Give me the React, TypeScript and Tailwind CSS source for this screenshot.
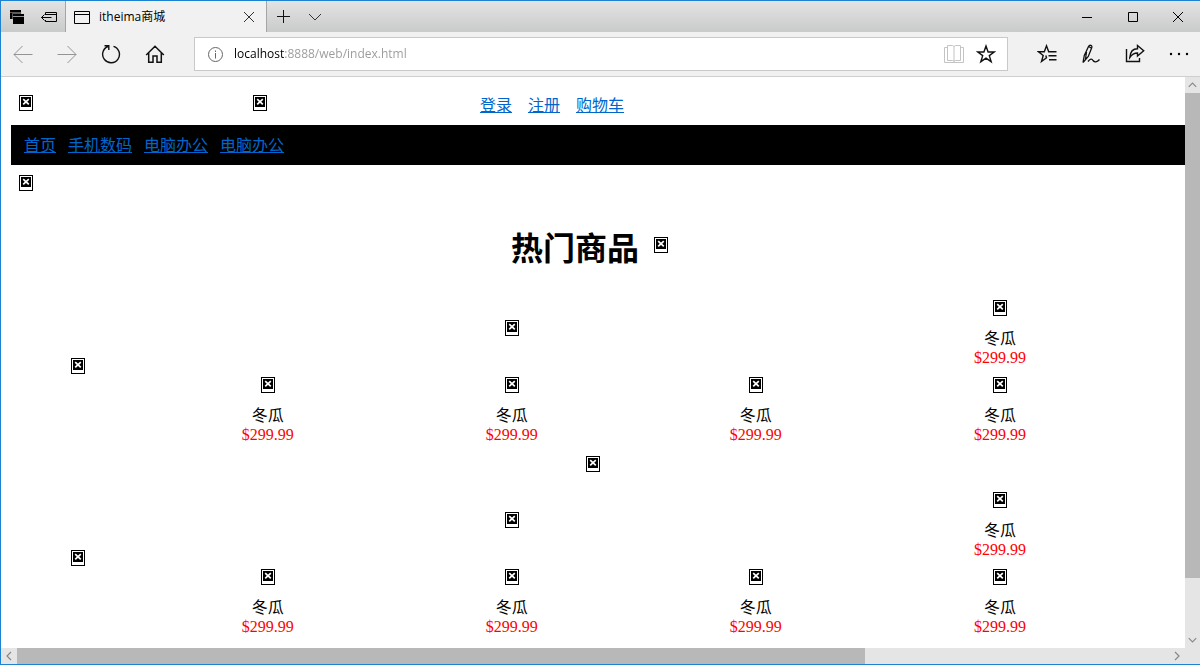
import type { ReactNode } from "react";

function BrokenImage({ label }: { label: string }) {
  return (
    <svg role="img" aria-label={label} width="14" height="16" viewBox="0 0 14 16" className="block shrink-0" shapeRendering="crispEdges">
      <rect x="0.5" y="0.5" width="13" height="15" fill="#fff" stroke="#000" />
      <rect x="2" y="2" width="10" height="10" fill="#000" />
      <path d="M4.2 4.2l5.600 5.200M9.800 4.200l-5.600 5.200" stroke="#fff" strokeWidth="1.7" shapeRendering="auto" />
    </svg>
  );
}

function IconButton({ label, className, children }: { label: string; className: string; children: ReactNode }) {
  return (
    <button type="button" aria-label={label} className={`flex shrink-0 items-center justify-center ${className}`}>
      {children}
    </button>
  );
}

function Icon({ size = 20, width = 1, color = "#111", children }: { size?: number; width?: number; color?: string; children: ReactNode }) {
  return (
    <svg width={size} height={size} viewBox={`0 0 ${size} ${size}`} fill="none" stroke={color} strokeWidth={width} aria-hidden="true">
      {children}
    </svg>
  );
}

function TitleBar() {
  return (
    <div className="flex h-[31px] shrink-0 bg-linear-to-b from-[#e3e3e3] to-[#c9cbca]">
      <IconButton label="Tabs you've set aside" className="w-8">
        <Icon size={16} color="none">
          <path d="M1 1h11v9H1z" fill="#000" />
          <path d="M4 5h11v10H4z" fill="#000" />
          <path d="M1 3.500h11M3.500 10.500V4.500h9" stroke="#999" strokeWidth="0.6" />
          <path d="M4 7.500h11" stroke="#bbb" strokeWidth="0.8" />
        </Icon>
      </IconButton>
      <IconButton label="Set these tabs aside" className="w-8">
        <Icon size={16} color="#000">
          <path d="M4.500 6V3.500H15.500V12.500H4.500V11M5 5.500H15M0.500 8.500H10.500M3.500 5.500L0.500 8.500L3.500 11.500" />
        </Icon>
      </IconButton>
      <div className="flex w-[202px] items-center border-x border-[#a5a5a5] bg-[#f1f1f1] pr-[9px] pl-2">
        <Icon size={16} color="#000">
          <path d="M0.500 2.500H15.500V14.500H0.500zM1 5.500H15" />
        </Icon>
        <span className="ml-[9px] flex-1 text-xs text-black">itheima商城</span>
        <IconButton label="Close tab" className="size-4">
          <Icon size={12} color="#333"><path d="M1 1L11 11M11 1L1 11" /></Icon>
        </IconButton>
      </div>
      <IconButton label="New tab" className="w-8">
        <Icon size={13}><path d="M6.500 0V13M0 6.500H13" /></Icon>
      </IconButton>
      <IconButton label="Show tab previews" className="w-8">
        <Icon size={14} color="#333"><path d="M1 4L7 10L13 4" /></Icon>
      </IconButton>
      <div className="flex-1" />
      <IconButton label="Minimize" className="w-[46px]">
        <Icon size={10} color="#000"><path d="M0 5.500H10" /></Icon>
      </IconButton>
      <IconButton label="Maximize" className="w-[46px]">
        <Icon size={10} color="#000"><path d="M0.500 0.500H9.500V9.500H0.500z" /></Icon>
      </IconButton>
      <IconButton label="Close" className="w-11">
        <Icon size={10} color="#000"><path d="M0 0L10 10M10 0L0 10" /></Icon>
      </IconButton>
    </div>
  );
}

const star = "M10 2L12.100 8H18.200L13.300 11.600L15.200 17.700L10 14.100L4.800 17.700L6.700 11.600L1.800 8H7.900Z";

function ToolBar() {
  return (
    <div className="flex h-[45px] shrink-0 items-center border-b border-[#cfcfcf] bg-[#f1f1f1]">
      <IconButton label="Back" className="w-11">
        <Icon color="#949494"><path d="M19.500 10.500H1M9.500 2L1 10.500L9.500 19" /></Icon>
      </IconButton>
      <IconButton label="Forward" className="w-11">
        <Icon color="#949494"><path d="M0.500 10.500H19M10.500 2L19 10.500L10.500 19" /></Icon>
      </IconButton>
      <IconButton label="Refresh" className="w-11">
        <Icon width={1.4}>
          <path d="M12.500 2.300A8.400 8.400 0 1 1 7 2.500M3.500 1.700H7.800V6" />
        </Icon>
      </IconButton>
      <IconButton label="Home" className="w-11">
        <Icon width={1.5}>
          <path d="M1.200 11L10 2.200L18.800 11M3.700 9V18.200H8V12H12V18.200H16.300V9" />
        </Icon>
      </IconButton>
      <div className="ml-[17px] flex h-[34px] flex-1 items-center border border-[#c9c9c9] bg-white pr-[11px] pl-3">
        <Icon size={17} color="#666">
          <circle cx="8.500" cy="8.500" r="7" />
          <path d="M8.500 7V12.500M8.500 4.500V6" />
        </Icon>
        <input
          type="text"
          aria-label="Address"
          defaultValue="localhost:8888/web/index.html"
          className="ml-[10px] min-w-0 flex-1 bg-[linear-gradient(to_right,#000_50px,#999_50px)] bg-clip-text text-xs leading-5 text-transparent outline-none"
        />
        <IconButton label="Reading view" className="w-8">
          <Icon color="#c4c4c4">
            <path d="M3.500 1.500H8.500L10 2.500L11.500 1.500H16.500V16.500H11.500L10 17L8.500 16.500H3.500zM10 2V18M3 3.500H0.500V18.500H19.500V3.500H17" />
          </Icon>
        </IconButton>
        <IconButton label="Add to favorites" className="ml-1.5 w-5">
          <Icon width={1.4}><path d={star} /></Icon>
        </IconButton>
      </div>
      <div className="ml-[17px] flex">
        <IconButton label="Favorites" className="w-11">
          <Icon width={1.4}>
            <path d="M19.500 7.700H11.700L9.500 1.800L7.300 7.700H1.500L6.200 11.400L4.500 17.500L9.500 13.800L8.800 11.500M11.500 11.700H19.500M12 15.700H19.500" />
          </Icon>
        </IconButton>
        <IconButton label="Add notes" className="w-11">
          <Icon width={1.3}>
            <path d="M2 18.500L3.300 11.500L7.500 2.500C8.500 0.500 11.500 1 10.800 3.500L7.300 12.500L2 18.500M7.500 2.500L10.300 4M5.500 8L4.500 15M7 17.500C9.500 14.500 11 14.500 12 16.500C13.500 18.500 16 18.500 18.500 15.500" />
          </Icon>
        </IconButton>
        <IconButton label="Share" className="w-11">
          <Icon width={1.4}>
            <path d="M1.500 5V17.500H14.500V14M12.500 1.500L18.700 6.700L12.500 12V9C9 9 6.800 10.500 4.800 13.500C5.200 8 8 4.700 12.500 4.700z" />
          </Icon>
        </IconButton>
        <IconButton label="Settings and more" className="w-[43px]">
          <Icon color="none">
            <circle cx="2" cy="10" r="1.200" fill="#000" />
            <circle cx="10" cy="10" r="1.200" fill="#000" />
            <circle cx="18" cy="10" r="1.200" fill="#000" />
          </Icon>
        </IconButton>
      </div>
    </div>
  );
}

function Product() {
  return (
    <article className="flex flex-col items-center pt-[11px] text-base leading-[19px]">
      <BrokenImage label="冬瓜" />
      <h2 className="mt-[13px] text-black">冬瓜</h2>
      <p className="font-['Liberation_Serif',serif] text-[#ff0000]">$299.99</p>
    </article>
  );
}

function ProductSection() {
  return (
    <section className="mr-[63px] grid grid-cols-[134fr_243fr_243fr_243fr_243fr] grid-rows-[77px_77px]">
      <div className="row-span-2 flex items-center justify-center">
        <BrokenImage label="分类广告" />
      </div>
      <div className="col-span-3 flex items-center justify-center">
        <BrokenImage label="活动广告" />
      </div>
      <Product />
      <Product />
      <Product />
      <Product />
      <Product />
    </section>
  );
}

function ShopPage() {
  const linkStyle = "text-[#0066cc] underline";
  return (
    <main className="min-w-0 flex-1 overflow-hidden bg-white pl-[10px] font-['Liberation_Serif','Noto_Sans_CJK_SC',sans-serif]">
      <header className="flex h-12 items-start pt-[18px] pl-2">
        <div className="w-[234px]"><BrokenImage label="商城标志" /></div>
        <div className="w-[227px]"><BrokenImage label="正品保障" /></div>
        <div className="flex gap-4 text-base leading-[22px]">
          <a href="#login" className={linkStyle}>登录</a>
          <a href="#register" className={linkStyle}>注册</a>
          <a href="#cart" className={linkStyle}>购物车</a>
        </div>
      </header>
      <nav className="flex h-10 items-center gap-3 bg-black pt-0.5 pl-[13px] text-base">
        <a href="#home" className={linkStyle}>首页</a>
        <a href="#phones" className={linkStyle}>手机数码</a>
        <a href="#computers" className={linkStyle}>电脑办公</a>
        <a href="#office" className={linkStyle}>电脑办公</a>
      </nav>
      <div className="h-[58px] pt-[10px] pl-2"><BrokenImage label="轮播图" /></div>
      <div className="flex h-[66px] items-start justify-center gap-[15px] pt-[2px] pr-[17px]">
        <h1 className="text-[32px] leading-12 font-bold text-black">热门商品</h1>
        <div className="pt-3"><BrokenImage label="热门商品" /></div>
      </div>
      <ProductSection />
      <div className="mr-[10px] flex h-[38px] items-center justify-center pt-1"><BrokenImage label="横幅广告" /></div>
      <ProductSection />
    </main>
  );
}

function Arrow({ path }: { path: string }) {
  return <Icon size={16} width={1.200} color="#888"><path d={path} /></Icon>;
}

export default function App() {
  return (
    <div className="flex h-screen flex-col overflow-hidden border-y border-l border-[#1e82d2] bg-white font-['Open_Sans','Noto_Sans_CJK_SC',sans-serif]">
      <TitleBar />
      <ToolBar />
      <div className="flex min-h-0 flex-1">
        <ShopPage />
        <div className="flex w-[15px] shrink-0 flex-col bg-[#e5e5e5]">
          <IconButton label="Scroll up" className="h-4"><Arrow path="M4 10L8 6L12 10" /></IconButton>
          <div className="flex-485 bg-[#b8b8b8]" />
          <div className="flex-54" />
          <IconButton label="Scroll down" className="h-4"><Arrow path="M4 6L8 10L12 6" /></IconButton>
        </div>
      </div>
      <div className="flex h-4 shrink-0 bg-[#e5e5e5] pr-[15px]">
        <IconButton label="Scroll left" className="w-4"><Arrow path="M10 4L6 8L10 12" /></IconButton>
        <div className="flex-848 bg-[#b8b8b8]" />
        <div className="flex-304" />
        <IconButton label="Scroll right" className="w-4"><Arrow path="M6 4L10 8L6 12" /></IconButton>
      </div>
    </div>
  );
}
